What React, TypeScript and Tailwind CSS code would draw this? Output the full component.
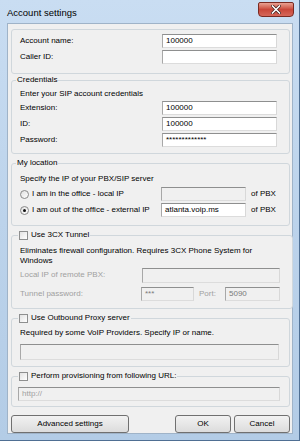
import React from 'react';

const TextBox = ({ value = '', disabled = false, className = '' }: { value?: string; disabled?: boolean; className?: string }) => (
  <div
    className={`h-[14px] flex items-center pl-[3px] border border-t-[#8e8f8f] border-l-[#a8a8a8] border-r-[#d8d8d8] border-b-[#dcdcdc] text-[8px] leading-none whitespace-nowrap ${
      disabled ? 'bg-[#f0f0f0] text-[#7a7a7a]' : 'bg-white text-black'
    } ${className}`}
  >
    {value}
  </div>
);

const Check = () => (
  <span className="w-[9px] h-[9px] shrink-0 border border-[#8e8f8f] bg-gradient-to-br from-[#e2e2e2] to-white" />
);

const Radio = ({ checked = false }: { checked?: boolean }) => (
  <span className="w-[9px] h-[9px] shrink-0 rounded-full border border-[#8a8a8a] bg-gradient-to-br from-[#e0e0e0] to-white flex items-center justify-center">
    {checked && <span className="w-[3px] h-[3px] rounded-full bg-[#111]" />}
  </span>
);

// legendClass carries the margin that puts the caption 6px in from the border
const Group = ({
  legend,
  legendClass,
  className = '',
  children,
}: {
  legend: React.ReactNode;
  legendClass: string;
  className?: string;
  children: React.ReactNode;
}) => (
  <fieldset className={`border border-[#d0d7dc] rounded-[3px] ${className}`}>
    <legend className={`px-[1px] leading-[10px] flex items-center gap-[3px] whitespace-nowrap ${legendClass}`}>{legend}</legend>
    {children}
  </fieldset>
);

const Button = ({ label, className = '' }: { label: string; className?: string }) => (
  <button className={`h-[18px] rounded-[3px] border border-[#707070] bg-gradient-to-b from-[#f2f2f2] to-[#dcdcdc] text-[8px] text-black ${className}`}>
    {label}
  </button>
);

const Row = ({ label, children, muted = false }: { label: string; children: React.ReactNode; muted?: boolean }) => (
  <div className="h-[14px] flex items-center">
    <span className={`flex-1 whitespace-nowrap ${muted ? 'text-[#a0a0a0]' : ''}`}>{label}</span>
    {children}
  </div>
);

export default function App() {
  return (
    <div className="w-[300px] h-[441px] flex flex-col bg-gradient-to-b from-[#c9ddf2] via-[#bcd3eb] to-[#b3cce6] border-r border-b border-[#4f6f93] font-['Liberation_Sans',Arial,sans-serif] text-[8px] text-black">
      {/* title bar */}
      <div className="h-[23px] shrink-0 flex items-start justify-between">
        <span className="pl-[7px] pt-[7px] text-[9.5px] leading-[11px] text-black">Account settings</span>
        <div className="mt-[2px] mr-[5px] w-[36px] h-[15px] rounded-b-[4px] rounded-t-[2px] border border-[#7a2a22] bg-gradient-to-b from-[#e8a193] via-[#c9473a] to-[#d5675a] flex items-center justify-center">
          <svg width="10" height="9" viewBox="0 0 10 9">
            <path d="M1.5 1 L8.5 8 M8.5 1 L1.5 8" stroke="#3a1a16" strokeWidth="3" strokeLinecap="square" />
            <path d="M1.5 1 L8.5 8 M8.5 1 L1.5 8" stroke="white" strokeWidth="1.6" strokeLinecap="square" />
          </svg>
        </div>
      </div>

      {/* client area */}
      <div className="flex-1 ml-[7px] mr-[6px] mb-[7px] bg-[#f0f0f0] border border-[#9fb3c8] pt-[5px] pl-[3px] pr-[2px] flex flex-col">
        <div className="h-[45px] border border-[#d0d7dc] rounded-[3px] pt-[4px] pl-[8px] pr-[12px] flex flex-col gap-[2px]">
          <Row label="Account name:">
            <TextBox value="100000" className="w-[115px]" />
          </Row>
          <Row label="Caller ID:">
            <TextBox className="w-[115px]" />
          </Row>
        </div>

        <Group legend="Credentials" legendClass="-ml-[4px]" className="mt-[1px] pl-[8px] pr-[12px] pb-[6px]">
          <div className="pt-[3px] leading-[11px]">Enter your SIP account credentials</div>
          <div className="mt-[2px] flex flex-col gap-[2px]">
            <Row label="Extension:">
              <TextBox value="100000" className="w-[115px]" />
            </Row>
            <Row label="ID:">
              <TextBox value="100000" className="w-[115px]" />
            </Row>
            <Row label="Password:">
              <TextBox value="*************" className="w-[115px]" />
            </Row>
          </div>
        </Group>

        <Group legend="My location" legendClass="-ml-[4px]" className="mt-[4px] pl-[8px] pr-[12px] pb-[8px]">
          <div className="pt-[5px] leading-[11px]">Specify the IP of your PBX/SIP server</div>
          <div className="mt-[3px] flex flex-col gap-[2px]">
            <div className="h-[14px] flex items-center">
              <Radio />
              <span className="ml-[3px] flex-1 whitespace-nowrap">I am in the office - local IP</span>
              <TextBox disabled className="w-[85px]" />
              <span className="ml-[5px] w-[26px] whitespace-nowrap">of PBX</span>
            </div>
            <div className="h-[14px] flex items-center">
              <Radio checked />
              <span className="ml-[3px] flex-1 whitespace-nowrap">I am out of the office - external IP</span>
              <TextBox value="atlanta.voip.ms" className="w-[85px]" />
              <span className="ml-[5px] w-[26px] whitespace-nowrap">of PBX</span>
            </div>
          </div>
        </Group>

        <Group
          legend={
            <>
              <Check />
              <span>Use 3CX Tunnel</span>
            </>
          }
          legendClass="-ml-[2px]"
          className="mt-[4px] pl-[8px] pr-[12px] pb-[7px]"
        >
          <div className="pt-[6px] leading-[10px]">
            Eliminates firewall configuration. Requires 3CX Phone System for
            <br />
            Windows
          </div>
          <div className="mt-[2px] flex flex-col gap-[5px]">
            <Row label="Local IP of remote PBX:" muted>
              <TextBox disabled className="w-[138px] h-[15px]" />
            </Row>
            <div className="h-[14px] flex items-center">
              <span className="w-[121px] text-[#a0a0a0] whitespace-nowrap">Tunnel password:</span>
              <TextBox disabled value="***" className="w-[53px]" />
              <span className="ml-[5px] w-[26px] text-[#a0a0a0]">Port:</span>
              <TextBox disabled value="5090" className="w-[55px]" />
            </div>
          </div>
        </Group>

        <Group
          legend={
            <>
              <Check />
              <span>Use Outbound Proxy server</span>
            </>
          }
          legendClass="-ml-[2px]"
          className="mt-[4px] pl-[8px] pr-[10px] pb-[6px]"
        >
          <div className="pt-[5px] leading-[10px]">Required by some VoIP Providers. Specify IP or name.</div>
          <TextBox disabled className="mt-[6px] h-[16px]" />
        </Group>

        <Group
          legend={
            <>
              <Check />
              <span>Perform provisioning from following URL:</span>
            </>
          }
          legendClass="ml-0"
          className="mt-[4px] pl-[6px] pr-[9px] pb-[5px]"
        >
          <TextBox disabled value="http://" className="mt-[6px] h-[12px] text-[#a0a0a0]" />
        </Group>

        <div className="mt-[8px] flex items-center">
          <Button label="Advanced settings" className="w-[118px]" />
          <div className="flex-1" />
          <Button label="OK" className="w-[56px]" />
          <Button label="Cancel" className="w-[56px] ml-[3px]" />
        </div>
      </div>
    </div>
  );
}
